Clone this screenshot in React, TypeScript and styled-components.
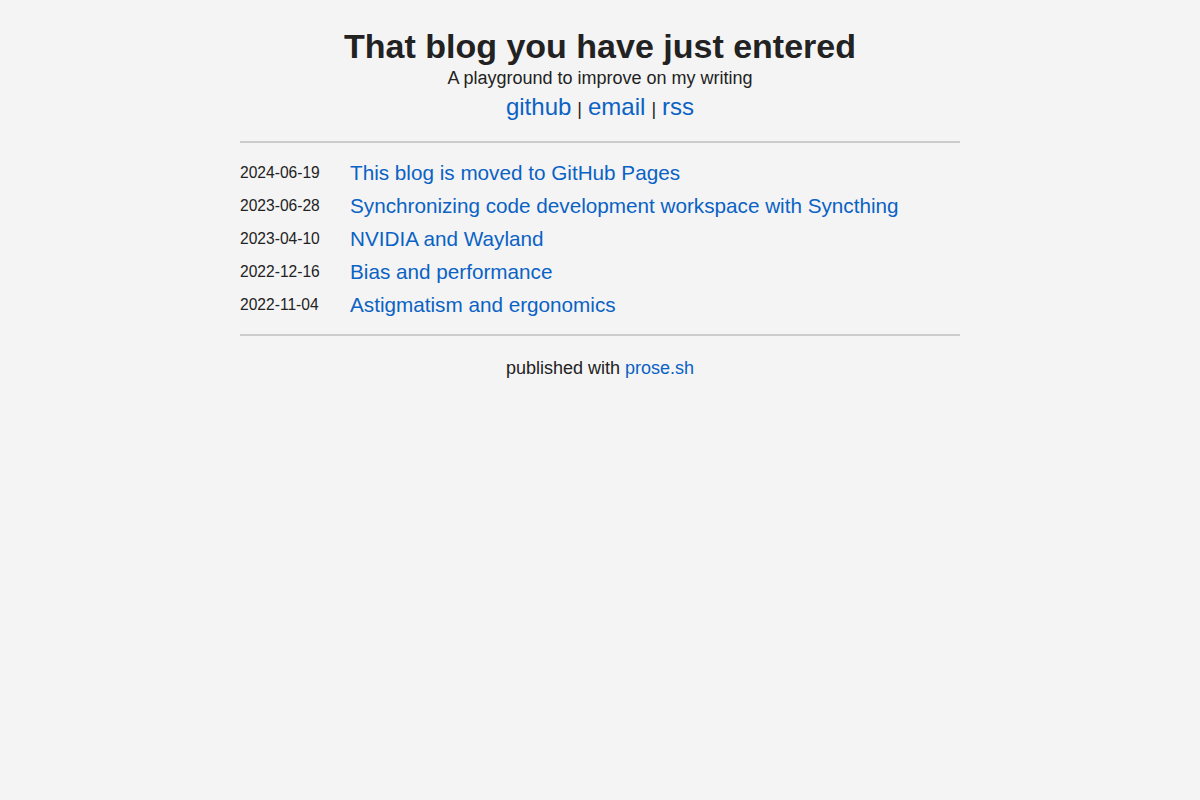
import React from 'react';
import styled, {createGlobalStyle} from 'styled-components';

const posts = [
    {date: '2024-06-19', title: 'This blog is moved to GitHub Pages'},
    {date: '2023-06-28', title: 'Synchronizing code development workspace with Syncthing'},
    {date: '2023-04-10', title: 'NVIDIA and Wayland'},
    {date: '2022-12-16', title: 'Bias and performance'},
    {date: '2022-11-04', title: 'Astigmatism and ergonomics'},
];

const App = () => {
    return (
        <>
            <GlobalStyle/>
            <Page>
                <Header>
                    <Title>That blog you have just entered</Title>
                    <Tagline>A playground to improve on my writing</Tagline>
                    <Links>
                        <Link href="#">github</Link>
                        <Sep>|</Sep>
                        <Link href="#">email</Link>
                        <Sep>|</Sep>
                        <Link href="#">rss</Link>
                    </Links>
                </Header>
                <Rule/>
                <PostList>
                    {posts.map(p => (
                        <PostRow key={p.date}>
                            <PostDate>{p.date}</PostDate>
                            <PostLink href="#">{p.title}</PostLink>
                        </PostRow>
                    ))}
                </PostList>
                <Rule/>
                <Footer>
                    published with <FooterLink href="#">prose.sh</FooterLink>
                </Footer>
            </Page>
        </>
    );
};

const GlobalStyle = createGlobalStyle`
  html, body {
    margin: 0;
    background: #f4f4f4;
    color: #222;
    font-family: "Liberation Sans", Arial, sans-serif;
  }
`

const Page = styled.main`
  width: 720px;
  margin: 0 auto;
  padding-top: 26px;
`

const Header = styled.header`
  display: flex;
  flex-direction: column;
  align-items: center;
  text-align: center;
  margin-bottom: 15px;
`

const Title = styled.h1`
  margin: 0;
  font-size: 34px;
  font-weight: 700;
  line-height: 40px;
  color: #222;
`

const Tagline = styled.p`
  margin: 0;
  font-size: 18px;
  line-height: 24px;
`

const Links = styled.nav`
  display: flex;
  align-items: baseline;
  gap: 6px;
  line-height: 34px;
`

const Link = styled.a`
  font-size: 24px;
  color: #0a62c4;
  text-decoration: none;
`

const Sep = styled.span`
  font-size: 18px;
`

const Rule = styled.hr`
  margin: 0;
  border: 0;
  border-top: 2px solid #ccc;
`

const PostList = styled.ul`
  list-style: none;
  margin: 13px 0;
  padding: 0;
`

const PostRow = styled.li`
  display: flex;
  align-items: center;
  height: 33px;
`

const PostDate = styled.span`
  width: 110px;
  flex: none;
  font-size: 15.6px;
`

const PostLink = styled.a`
  font-size: 20.7px;
  color: #0a62c4;
  text-decoration: none;
`

const Footer = styled.footer`
  margin-top: 21px;
  text-align: center;
  font-size: 18px;
  line-height: 22px;
`

const FooterLink = styled.a`
  color: #0a62c4;
  text-decoration: none;
`

export default App;
